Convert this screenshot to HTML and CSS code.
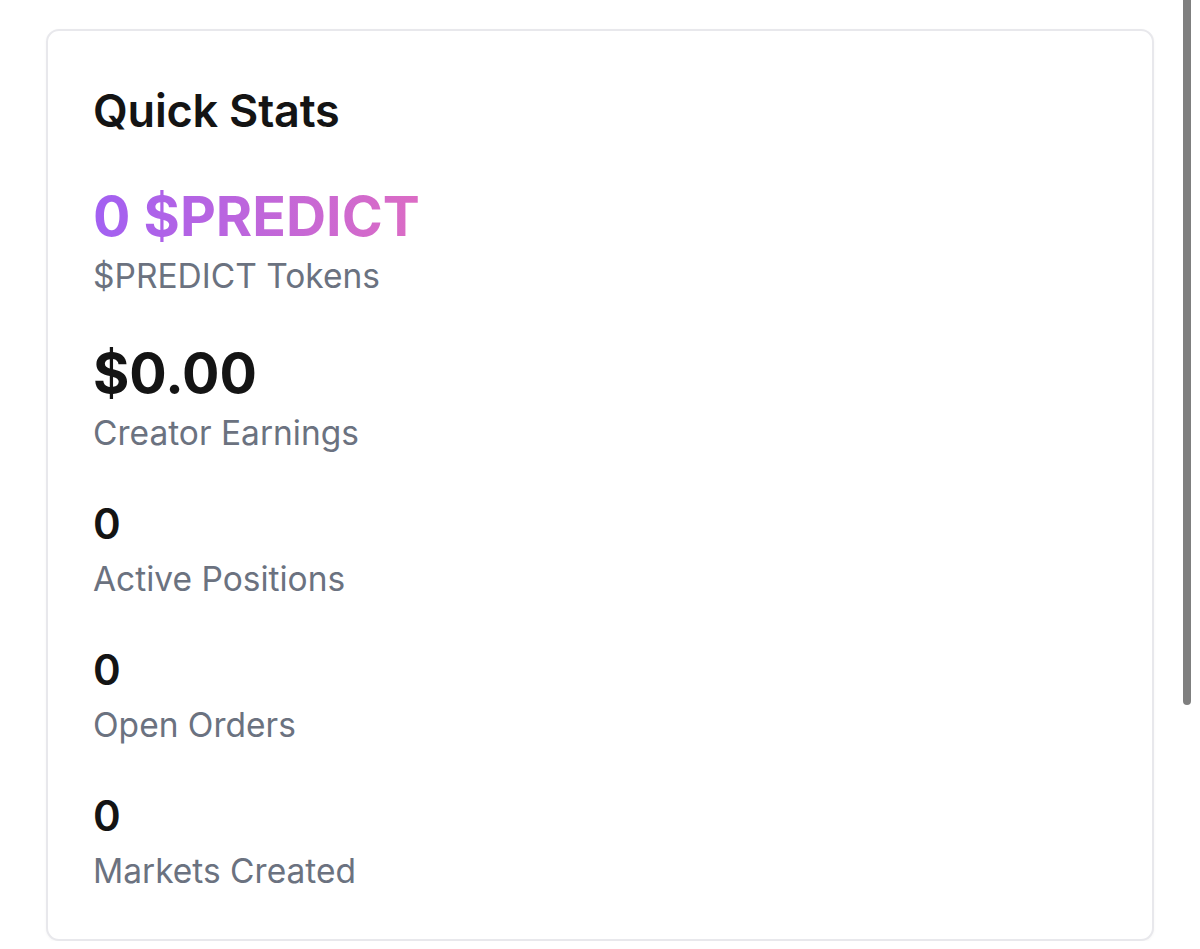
FILE: index.html
```html
<!DOCTYPE html>
<html lang="en">
<head>
<meta charset="utf-8">
<title>Quick Stats</title>
<link rel="stylesheet" href="styles.css">
</head>
<body>
<div class="page">
  <section class="card">
    <h2 class="card-title">Quick Stats</h2>
    <div class="stats">
      <div class="stat">
        <div class="value value-lg"><span class="gradient">0 $PREDICT</span></div>
        <div class="label">$PREDICT Tokens</div>
      </div>
      <div class="stat">
        <div class="value value-lg">$0.00</div>
        <div class="label">Creator Earnings</div>
      </div>
      <div class="stat">
        <div class="value value-md">0</div>
        <div class="label">Active Positions</div>
      </div>
      <div class="stat">
        <div class="value value-md">0</div>
        <div class="label">Open Orders</div>
      </div>
      <div class="stat">
        <div class="value value-md">0</div>
        <div class="label">Markets Created</div>
      </div>
    </div>
  </section>
</div>
<div class="scroll-thumb"></div>
</body>
</html>
```

FILE: styles.css
```css
html, body {
  margin: 0;
  padding: 0;
  background: #ffffff;
}

body {
  font-family: Inter, "Noto Sans", "Liberation Sans", sans-serif;
  color: #111111;
  overflow: hidden;
}

.page {
  padding: 29px 46px 0 46px;
}

.card {
  width: 1108px;
  height: 912px;
  box-sizing: border-box;
  border: 2px solid #e8e8ec;
  border-radius: 13px;
  background: #ffffff;
  box-shadow: 0 1px 3px rgba(0, 0, 0, 0.04);
  padding: 52px 45px 0 45px;
}

.card-title {
  margin: 0;
  font-size: 45px;
  line-height: 56px;
  font-weight: 600;
  letter-spacing: -0.2px;
  color: #141414;
}

.stats {
  display: flex;
  flex-direction: column;
  gap: 38px;
  margin-top: 44px;
}

.stat {
  display: flex;
  flex-direction: column;
}

.stats .stat:first-child {
  margin-bottom: 1px;
}

.value {
  color: #141414;
}

.value-lg {
  font-size: 55.5px;
  line-height: 66px;
  font-weight: 700;
  letter-spacing: 0;
}

.value-md {
  font-size: 42px;
  line-height: 56px;
  font-weight: 600;
}

.gradient {
  background: linear-gradient(90deg, #a260f2 0%, #dc6cc4 100%);
  -webkit-background-clip: text;
  background-clip: text;
  color: transparent;
}

.label {
  padding-top: 2px;
  font-size: 33.5px;
  line-height: 50px;
  font-weight: 400;
  color: #6b7280;
}

.scroll-thumb {
  position: fixed;
  top: 0;
  left: 1183px;
  width: 8px;
  height: 705px;
  background: #7f7f7f;
  border-radius: 0 0 4px 4px;
}
```
